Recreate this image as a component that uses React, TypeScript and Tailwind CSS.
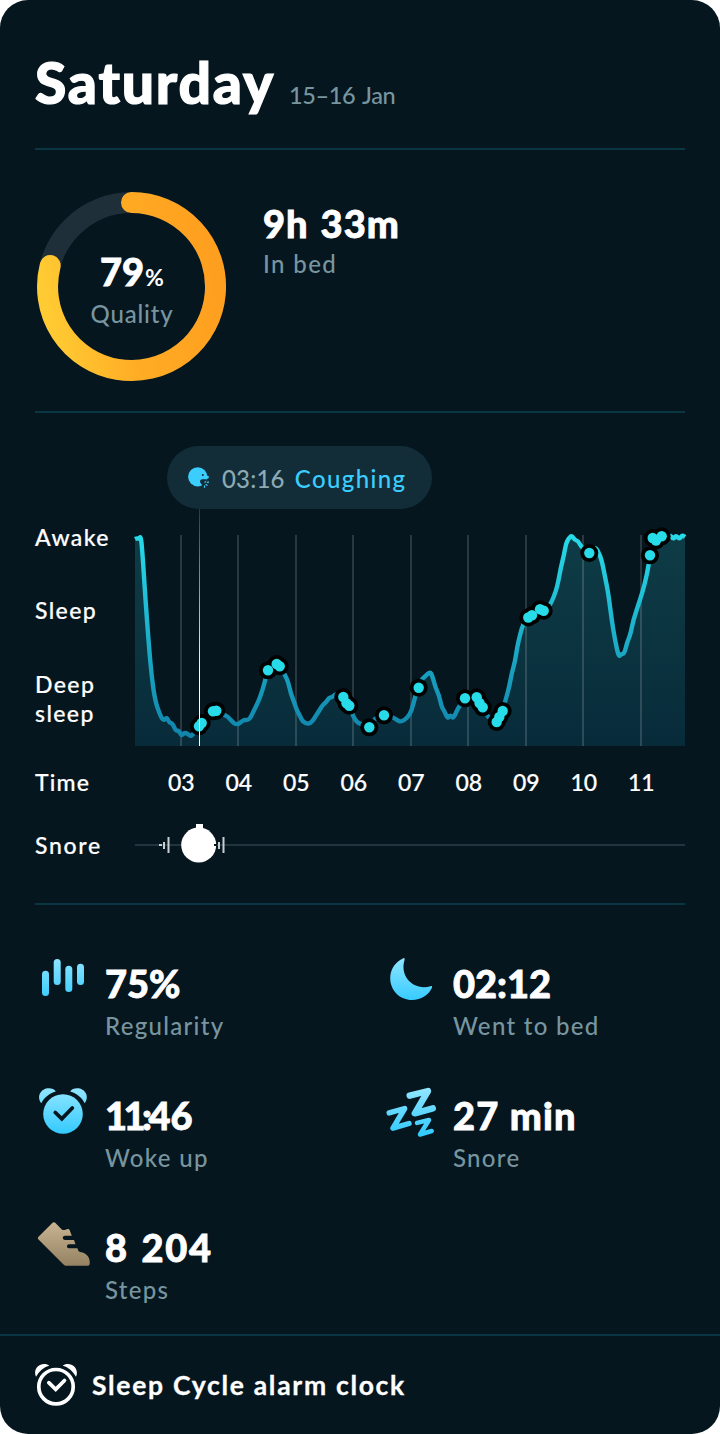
import type { ReactNode } from "react";

const hours = ["03", "04", "05", "06", "07", "08", "09", "10", "11"];
const hourLines = [46, 103, 161, 218, 276, 333, 391, 448, 506];

// Sleep depth samples, in chart pixels
const curve: [number, number][] = [
  [0, 30], [2, 29], [4, 30], [5.5, 27], [7, 37], [10.5, 91], [14, 138], [16.7, 167.7], [20, 191], [24.3, 204.3],
  [28.3, 212], [31.7, 208], [34.3, 213.7], [37.7, 214.5], [40.7, 222], [44, 221.5], [46.3, 227], [49.3, 223.5],
  [52.7, 224.7], [55.3, 227.3], [58.3, 225.3], [64, 217.3], [66.7, 214], [73, 206], [78, 202], [81.7, 201.7],
  [90, 206.3], [93.3, 208], [96.7, 212.3], [101.7, 216], [106.7, 212.7], [109, 211], [113.3, 211], [115.7, 208.3],
  [118.3, 202.7], [123.3, 192.7], [127.3, 181.7], [130, 171.7], [133, 161.3], [141.7, 154], [145, 157.7], [150, 166],
  [153.3, 173.3], [155.7, 184], [159, 192.7], [161.7, 201], [165.7, 208.3], [167.7, 212.7], [173.3, 215.3],
  [177.7, 212], [180.7, 207], [184, 202], [187.7, 196], [190.7, 193.7], [194, 188.7], [197.3, 188.3], [200.7, 184.5],
  [208.3, 188], [211.7, 194.3], [214.3, 196.7], [218.3, 207.7], [222.3, 213.7], [226.7, 215], [234.3, 218.8],
  [240, 208.7], [249, 205.8], [258.3, 208.3], [261.7, 211], [266, 213], [272.3, 209], [276.7, 201.7],
  [280, 187.7], [283.7, 178.7], [286.7, 170], [290, 167.7], [295, 162.5], [297.3, 166.7], [300.7, 179.3],
  [304, 186], [306.7, 198.3], [309.3, 201.7], [312.7, 210], [315.3, 205.5], [318.3, 210], [322.3, 200.3],
  [330, 188.8], [341.7, 187.8], [347.7, 198.3], [352.3, 207.7], [361.7, 214], [367.7, 202], [371, 189.3],
  [374.3, 177.7], [376.7, 164.3], [380, 152.7], [382.3, 137.7], [385, 126], [388.3, 114.3], [393.3, 108.3],
  [397.3, 106], [405, 99.8], [408.7, 101.7], [413.5, 98], [416.7, 92.7], [420.7, 82.7], [423.3, 72.7],
  [426, 57.7], [429, 46], [431, 34.3], [434, 29], [436.7, 26.5], [439.7, 31], [443.3, 32], [446, 37.7],
  [454.3, 45], [460, 37.8], [463.3, 42.7], [466.7, 51], [470, 67.7], [473.3, 84.3], [476.7, 111], [480, 131],
  [483.7, 148], [486.3, 145], [489.3, 144.7], [492.3, 132.7], [495.3, 126], [498.3, 111], [505, 91],
  [510, 74.3], [513.7, 56], [515, 46.3], [517.3, 28.7], [526.7, 27], [535.7, 26], [538.3, 30.5],
  [541, 26], [544.3, 30.5], [547.3, 26], [550, 28],
];

const sounds: [number, number][] = [
  [64, 217.3], [66.7, 214], [78, 202.3], [81.3, 201.7], [133, 161.3], [141.7, 155], [144.7, 157.3],
  [208.3, 188], [211.5, 194.3], [214.3, 196.7], [234.3, 218.3], [249, 206.3], [283.7, 178.7], [330, 189.3],
  [341.7, 188.3], [344.5, 194], [347.7, 198.3], [361.7, 213], [364.3, 208], [367.7, 202], [393.3, 108.5],
  [397, 106.3], [405, 100.3], [408.7, 101.7], [454.3, 44], [515, 46.3], [517.7, 29], [521, 31.5], [526.7, 27.3],
];

// Rounds the corners by running quadratics through the midpoints
function smoothPath(points: [number, number][]) {
  let d = `M${points[0][0]} ${points[0][1]}`;
  for (let i = 1; i < points.length - 1; i++) {
    const [x, y] = points[i];
    const [nx, ny] = points[i + 1];
    d += `Q${x} ${y} ${(x + nx) / 2} ${(y + ny) / 2}`;
  }
  const last = points[points.length - 1];
  return `${d}L${last[0]} ${last[1]}`;
}

const line = smoothPath(curve);

function Divider() {
  return <div className="h-0.5 bg-[#0a3542]" />;
}

function QualityRing() {
  return (
    <div className="relative flex h-[190px] w-[190px] flex-col items-center">
      <svg className="absolute inset-0" width="190" height="190" viewBox="0 0 190 190" fill="none">
        <defs>
          <linearGradient id="ring" gradientUnits="userSpaceOnUse" x1="2" y1="75" x2="170" y2="45">
            <stop offset="0" stopColor="#ffcb33" />
            <stop offset="0.45" stopColor="#ffad25" />
            <stop offset="1" stopColor="#ff9f1f" />
          </linearGradient>
        </defs>
        <circle cx="94.5" cy="94.5" r="84" stroke="#1e2f3a" strokeWidth="21" />
        <path d="M94.5 10.5A84 84 0 1 1 13.2 73.5" stroke="url(#ring)" strokeWidth="21" strokeLinecap="round" />
      </svg>
      <div className="mt-[55px] flex h-[50px] items-baseline text-[38px] leading-[48px] font-black [-webkit-text-stroke:0.8px]">
        79<span className="ml-px text-[23px] font-bold [-webkit-text-stroke:0px]">%</span>
      </div>
      <div className="text-2xl leading-[34px] font-medium tracking-[0.8px] text-[#78959f]">Quality</div>
    </div>
  );
}

function CoughIcon() {
  return (
    <svg width="22" height="22" viewBox="0 0 22 22">
      <circle cx="9.7" cy="9.8" r="9.6" fill="#3ccdff" />
      <path d="M16 5.5l2.9 3c1.700.3 2.200 1.200 1.900 2.100-.3 1-1 1.300-2.800 1.300L15 14Z" fill="#3ccdff" />
      <circle cx="14.8" cy="8" r="1" fill="#122d38" />
      <path d="M18.500 12.300h-3.800c-2.200 0-3.300 1.700-2.300 3.400l2.400 3.300 4-3Z" fill="#122d38" />
      <path d="M16.500 15.500l1.300-.9M18.800 15.300l2.200-.2M17.500 17.300l2 1.200M16.500 18.500v2.200" stroke="#3ccdff" strokeWidth="1.2" />
    </svg>
  );
}

function SleepChart() {
  return (
    <svg className="block" width="550" height="237" viewBox="0 0 550 237" fill="none" overflow="visible">
      <defs>
        <linearGradient id="stroke" gradientUnits="userSpaceOnUse" x1="0" y1="26" x2="0" y2="237">
          <stop offset="0" stopColor="#27dbe9" />
          <stop offset="1" stopColor="#1080a8" />
        </linearGradient>
        <linearGradient id="area" gradientUnits="userSpaceOnUse" x1="0" y1="26" x2="0" y2="237">
          <stop offset="0" stopColor="#0e3c46" />
          <stop offset="1" stopColor="#082b3a" />
        </linearGradient>
        <linearGradient id="marker" gradientUnits="userSpaceOnUse" x1="0" y1="0" x2="0" y2="237">
          <stop offset="0" stopColor="#fff" stopOpacity="0.15" />
          <stop offset="0.7" stopColor="#fff" />
        </linearGradient>
      </defs>
      <path d={`${line}V237H0Z`} fill="url(#area)" />
      {hourLines.map((x) => (
        <rect key={x} x={x - 1} y="26" width="2" height="211" fill="#fff" fillOpacity="0.15" />
      ))}
      <path d={line} stroke="url(#stroke)" strokeWidth="4.4" strokeLinejoin="round" />
      {sounds.map(([x, y]) => (
        <circle key={x} cx={x} cy={y} r="9" fill="#000" />
      ))}
      {sounds.map(([x, y]) => (
        <circle key={x} cx={x} cy={y} r="5.2" fill="#27dbe9" />
      ))}
      <rect x="64" y="0" width="1" height="237" fill="url(#marker)" />
    </svg>
  );
}

function SnoreTrack() {
  return (
    <svg className="block" width="550" height="44" viewBox="0 0 550 44">
      <rect y="22" width="550" height="2" fill="#22343d" />
      <g fill="#c8ced1">
        <rect x="24" y="22" width="3" height="2" />
        <rect x="28" y="20" width="2" height="7" />
        <rect x="32.5" y="15" width="2" height="16" />
        <rect x="83" y="20" width="2" height="7" />
        <rect x="87.5" y="15" width="2" height="16" />
      </g>
      <rect x="61" y="2" width="7" height="8" fill="#fff" />
      <circle cx="63.7" cy="23" r="17.5" fill="#fff" />
      <rect x="79" y="22" width="3" height="2" fill="#05161f" />
    </svg>
  );
}

function BlueGradient({ id }: { id: string }) {
  return (
    <defs>
      <linearGradient id={id} gradientUnits="userSpaceOnUse" x1="0" y1="4" x2="0" y2="50">
        <stop offset="0" stopColor="#92e6ff" />
        <stop offset="1" stopColor="#33caff" />
      </linearGradient>
    </defs>
  );
}

function BarsIcon() {
  return (
    <svg width="56" height="56" viewBox="0 0 56 56" fill="url(#bars)">
      <BlueGradient id="bars" />
      <rect x="7" y="18.7" width="7" height="25.3" rx="3.5" />
      <rect x="18.7" y="7" width="7" height="26" rx="3.5" />
      <rect x="30.3" y="13.7" width="7" height="26.3" rx="3.5" />
      <rect x="42" y="11.7" width="7" height="21.3" rx="3.5" />
    </svg>
  );
}

function MoonIcon() {
  return (
    <svg width="56" height="56" viewBox="0 0 56 56" fill="url(#moon)">
      <BlueGradient id="moon" />
      <path d="M20.4 6.200C12.600 9.600 7.200 17 7.200 26.200 7.200 38.500 17 48 29 48c9.300 0 16.700-5 20-12.200.5-1.300-.3-2-1.500-1.600C30.500 39 16.500 24.500 21.500 8c.4-1.400.1-2.200-1.100-1.800Z" />
    </svg>
  );
}

function AlarmIcon() {
  return (
    <svg width="56" height="56" viewBox="0 0 56 56" fill="url(#alarm)">
      <BlueGradient id="alarm" />
      <path d="M6.3 19.3C1 12.500 6 4.300 13.800 4.300c3.200 0 5.700 1 7 3.100C14.500 9 9 13.500 6.300 19.300Z" />
      <path d="M49.7 19.300C55 12.500 50 4.300 42.200 4.300c-3.200 0-5.700 1-7 3.100C41.500 9 47 13.500 49.700 19.300Z" />
      <circle cx="28" cy="30" r="19.8" />
      <path d="M20.3 28.500l6.500 6.300L37.300 24" fill="none" stroke="#05161f" strokeWidth="3.8" strokeLinecap="round" />
    </svg>
  );
}

function SnoreIcon() {
  return (
    <svg width="56" height="56" viewBox="0 0 56 56" fill="none" stroke="url(#snore)" strokeLinecap="round" strokeLinejoin="round">
      <BlueGradient id="snore" />
      <path d="M26.7 11.700l18.300-4.700-13.200 22.300L49.800 24.300" strokeWidth="6.4" />
      <path d="M6.2 28.900l15.500-4.400L10 44.200l16-4.700" strokeWidth="5.4" />
      <path d="M34 38.900l12-2.900-9 14.500 11.700-3.500" strokeWidth="4.5" />
    </svg>
  );
}

function ShoeIcon() {
  return (
    <svg width="56" height="56" viewBox="0 0 56 56">
      <defs>
        <linearGradient id="shoe" x1="0" y1="0" x2="0" y2="1">
          <stop offset="0" stopColor="#c9b492" />
          <stop offset="1" stopColor="#948262" />
        </linearGradient>
      </defs>
      <path
        d="M3.500 20.700 17.300 7c1-1 2.200-1 3.200 0l6 6.200c1 1.100 2.700 1.100 4.100.6l1.900-.7c1-.4 1.700 0 2.100 1l2.200 5.700H30c-3 0-3 4.200 0 4.200h9l1.500 4.200H34c-2.700 0-2.700 4 0 4h8.500c.4 2 1 3.400 2.700 3.700 6.400 1 9.800 5.300 9.600 11 0 1.900-.8 2.800-2.600 2.800H31.700c-1.400 0-2.300-.4-3.200-1.300L3.500 23.400c-.9-1-.9-1.800 0-2.700Z"
        fill="url(#shoe)"
      />
    </svg>
  );
}

function ClockLogo() {
  return (
    <svg width="42" height="46" viewBox="0 0 42 46" fill="none" stroke="#fff" strokeWidth="3.7" strokeLinecap="round">
      <path d="M1 14.700C-2 8 3 2 9 2c2.300 0 4.200.6 5.300 1.600C8.500 5.500 4 9.500 1 14.700Z" fill="#fff" stroke="none" />
      <path d="M41 14.700C44 8 39 2 33 2c-2.300 0-4.200.6-5.300 1.600C33.500 5.500 38 9.500 41 14.700Z" fill="#fff" stroke="none" />
      <circle cx="21" cy="24.7" r="17.2" />
      <path d="M13.8 20.700l6.900 6.600L29.500 18.500" />
    </svg>
  );
}

function Stat({ icon, value, label }: { icon: ReactNode; value: ReactNode; label: string }) {
  return (
    <div className="flex h-[132px]">
      <div className="w-[70px]">{icon}</div>
      <div className="pt-2">
        <div className="text-[38px] leading-[46px] font-black whitespace-nowrap [-webkit-text-stroke:0.8px]">{value}</div>
        <div className="mt-1 text-2xl leading-8 font-medium tracking-[1.3px] whitespace-nowrap text-[#78959f]">{label}</div>
      </div>
    </div>
  );
}

export default function App() {
  return (
    <div className="bg-white">
      <main className="flex h-[1434px] w-[720px] flex-col overflow-hidden rounded-[28px] bg-[#05161f] font-['Lato',sans-serif] text-white">
        <div className="px-[35px]">
          <header className="flex h-[148px] items-baseline pt-[47px]">
            <h1 className="text-[57px] leading-[70px] font-black tracking-[1.8px] [-webkit-text-stroke:1.2px]">Saturday</h1>
            <span className="ml-3.5 text-[23.5px] font-medium tracking-[-0.4px] text-[#78959f] [word-spacing:2px]">15–16 Jan</span>
          </header>
          <Divider />

          <section className="flex h-[261px] pt-[42px] pl-0.5">
            <QualityRing />
            <div className="ml-9 pt-[9px]">
              <div className="text-[38px] leading-[44px] font-black tracking-[1px] [word-spacing:2px] [-webkit-text-stroke:0.8px]">9h 33m</div>
              <div className="mt-0.5 text-2xl leading-[34px] font-medium tracking-[1.4px] text-[#78959f]">In bed</div>
            </div>
          </section>
          <Divider />

          <section className="h-[490px] pt-[33px]">
            <div className="ml-[132px] flex h-[63px] w-[265px] items-center rounded-full bg-[#122d38] pt-0.5 pl-[21px] text-2xl font-medium">
              <div className="pb-0.5">
                <CoughIcon />
              </div>
              <span className="ml-3 tracking-[0.2px] text-[#8ca9b4]">03:16</span>
              <span className="ml-2.5 tracking-[1.4px] text-[#3ccdff]">Coughing</span>
            </div>
            <div className="flex text-[23px] leading-[29px] font-medium tracking-[1.4px] [-webkit-text-stroke:0.2px]">
              <div className="flex w-[100px] flex-col pt-[14px]">
                <span className="h-[73px]">Awake</span>
                <span className="h-[74px]">Sleep</span>
                <span>Deep</span>
                <span>sleep</span>
              </div>
              <SleepChart />
            </div>
            <div className="mt-[22px] flex h-[29px] text-[23px] leading-[29px] font-medium [-webkit-text-stroke:0.2px]">
              <span className="w-[117.5px] tracking-[1.2px]">Time</span>
              <div className="flex">
                {hours.map((hour) => (
                  <span key={hour} className="w-[57.5px] text-center">{hour}</span>
                ))}
              </div>
            </div>
            <div className="mt-[25px] flex h-[44px] text-[23px] leading-[47px] font-medium tracking-[1.7px] [-webkit-text-stroke:0.2px]">
              <span className="w-[100px]">Snore</span>
              <SnoreTrack />
            </div>
          </section>
          <Divider />

          <section className="grid h-[429px] grid-cols-[348px_302px] content-start pt-[47px]">
            <Stat icon={<BarsIcon />} value="75%" label="Regularity" />
            <Stat icon={<MoonIcon />} value="02:12" label="Went to bed" />
            <Stat
              icon={<AlarmIcon />}
              value={
                <>
                  <span className="tracking-[-3.5px]">11:</span>46
                </>
              }
              label="Woke up"
            />
            <Stat icon={<SnoreIcon />} value={<span className="tracking-[1.2px]">27 min</span>} label="Snore" />
            <Stat icon={<ShoeIcon />} value={<span className="tracking-[1.7px] [word-spacing:2px]">8 204</span>} label="Steps" />
          </section>
        </div>
        <Divider />
        <footer className="flex items-start px-[35px] pt-[26px]">
          <ClockLogo />
          <span className="ml-[15px] pt-[5px] text-[26.5px] leading-9 font-bold tracking-[1.7px] [-webkit-text-stroke:0.3px]">Sleep Cycle alarm clock</span>
        </footer>
      </main>
    </div>
  );
}
